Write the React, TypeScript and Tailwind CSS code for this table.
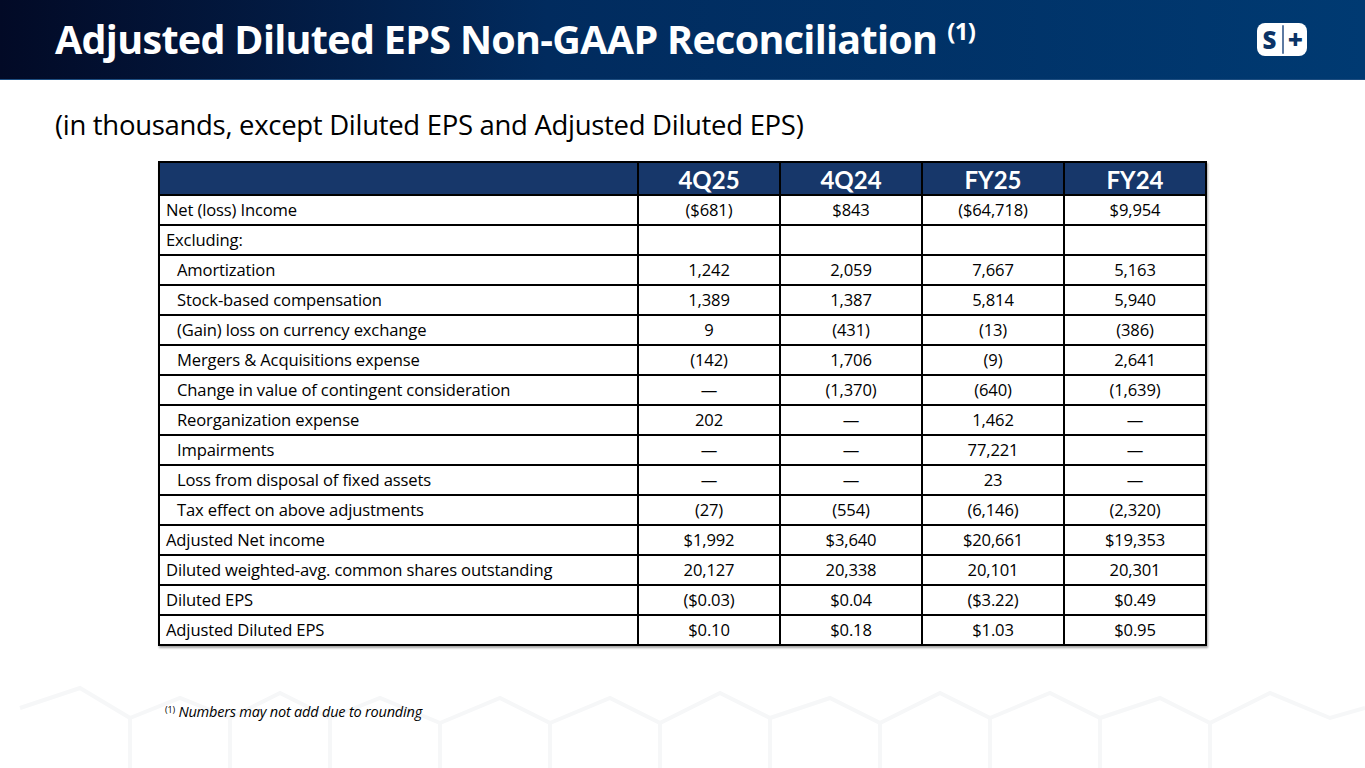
import React from "react";

type Row = { label: string; indent?: boolean; v: string[] };

const rows: Row[] = [
  { label: "Net (loss) Income", v: ["($681)", "$843", "($64,718)", "$9,954"] },
  { label: "Excluding:", v: ["", "", "", ""] },
  { label: "Amortization", indent: true, v: ["1,242", "2,059", "7,667", "5,163"] },
  { label: "Stock-based compensation", indent: true, v: ["1,389", "1,387", "5,814", "5,940"] },
  { label: "(Gain) loss on currency exchange", indent: true, v: ["9", "(431)", "(13)", "(386)"] },
  { label: "Mergers & Acquisitions expense", indent: true, v: ["(142)", "1,706", "(9)", "2,641"] },
  { label: "Change in value of contingent consideration", indent: true, v: ["—", "(1,370)", "(640)", "(1,639)"] },
  { label: "Reorganization expense", indent: true, v: ["202", "—", "1,462", "—"] },
  { label: "Impairments", indent: true, v: ["—", "—", "77,221", "—"] },
  { label: "Loss from disposal of fixed assets", indent: true, v: ["—", "—", "23", "—"] },
  { label: "Tax effect on above adjustments", indent: true, v: ["(27)", "(554)", "(6,146)", "(2,320)"] },
  { label: "Adjusted Net income", v: ["$1,992", "$3,640", "$20,661", "$19,353"] },
  { label: "Diluted weighted-avg. common shares outstanding", v: ["20,127", "20,338", "20,101", "20,301"] },
  { label: "Diluted EPS", v: ["($0.03)", "$0.04", "($3.22)", "$0.49"] },
  { label: "Adjusted Diluted EPS", v: ["$0.10", "$0.18", "$1.03", "$0.95"] },
];

const heads = ["4Q25", "4Q24", "FY25", "FY24"];

function Logo() {
  return (
    <div className="flex h-[33px] w-[50px] items-stretch rounded-[8px] bg-white">
      <div className="flex w-[25px] items-center justify-center text-[24px] font-extrabold leading-[33px] text-[#0b3366]" style={{ fontFamily: "'Open Sans', sans-serif" }}>
        S
      </div>
      <div className="my-[2px] w-[1.5px] rounded-full bg-[#5d7aa2]" />
      <div className="flex flex-1 items-center justify-center text-[26px] font-extrabold leading-[33px] text-[#0b3366]" style={{ fontFamily: "'Open Sans', sans-serif" }}>
        +
      </div>
    </div>
  );
}

function Hex() {
  return (
    <svg width="1365" height="90" viewBox="0 0 1365 90" className="block">
      <g stroke="#f6f7f8" strokeWidth="4" fill="none">
        <path d="M20 30 L80 10 L130 40 L130 90 M130 40 L180 20 L230 40 L230 90 M230 40 L280 15 L330 40 L330 90 M330 40 L380 20 L440 45 L440 90 M440 45 L500 20 L550 45 L550 90 M550 45 L610 20 L660 45 L660 90 M660 45 L720 15 L770 40 L770 90 M770 40 L830 20 L880 45 L880 90 M880 45 L940 15 L990 40 L990 90 M990 40 L1050 15 L1100 40 L1100 90 M1100 40 L1160 20 L1210 45 L1210 90 M1210 45 L1270 15 L1330 40 L1365 30" />
      </g>
    </svg>
  );
}

export default function App() {
  const font = { fontFamily: "'Open Sans', Lato, sans-serif" };
  return (
    <div className="relative h-[768px] w-[1365px] overflow-hidden bg-white" style={font}>
      <div className="absolute bottom-0 left-0">
        <Hex />
      </div>
      <div className="relative flex flex-col">
        <div className="flex h-[80px] shrink-0 items-center justify-between border-b border-[#1d4d80] bg-gradient-to-r from-[#020a26] via-[#012b5e] via-40% to-[#003a72] pl-[55px] pr-[58px]">
          <h1 className="whitespace-nowrap text-[39.5px] font-bold leading-none tracking-[-0.7px] text-white">
            Adjusted Diluted EPS Non-GAAP Reconciliation
            <span className="relative top-[-14px] ml-[10px] text-[24px]">(1)</span>
          </h1>
          <Logo />
        </div>

        <div className="pl-[55px] pt-[27px] text-[27.5px] leading-[36px] tracking-[-0.3px] text-black">
          (in thousands, except Diluted EPS and Adjusted Diluted EPS)
        </div>

        <div className="pl-[158px] pt-[18px]">
          <table className="w-[1049px] table-fixed border-collapse border-2 border-black shadow-[1px_2px_2px_rgba(0,0,0,0.35)]">
            <colgroup>
              <col className="w-[479px]" />
              <col />
              <col />
              <col />
              <col />
            </colgroup>
            <thead>
              <tr className="h-[33px] bg-[#17376a]">
                <th className="border-2 border-black" />
                {heads.map((h) => (
                  <th key={h} className="border-2 border-black p-0 pt-[2px] text-center text-[24px] font-bold leading-none text-white" style={{ fontFamily: "Lato, sans-serif" }}>
                    {h}
                  </th>
                ))}
              </tr>
            </thead>
            <tbody>
              {rows.map((r) => (
                <tr key={r.label} className="h-[30px]">
                  <td className={`border-2 border-black py-0 text-[16.6px] leading-none tracking-[-0.15px] text-black ${r.indent ? "pl-[17px]" : "pl-[6px]"}`}>
                    {r.label}
                  </td>
                  {r.v.map((x, i) => (
                    <td key={i} className="border-2 border-black p-0 text-center text-[16.6px] leading-none tracking-[-0.15px] text-black">
                      {x}
                    </td>
                  ))}
                </tr>
              ))}
            </tbody>
          </table>
        </div>

        <div className="pl-[165px] pt-[59px] text-[14.5px] italic leading-none tracking-[-0.2px] text-black">
          <sup className="text-[9px] not-italic">(1)</sup> Numbers may not add due to rounding
        </div>
      </div>
    </div>
  );
}
